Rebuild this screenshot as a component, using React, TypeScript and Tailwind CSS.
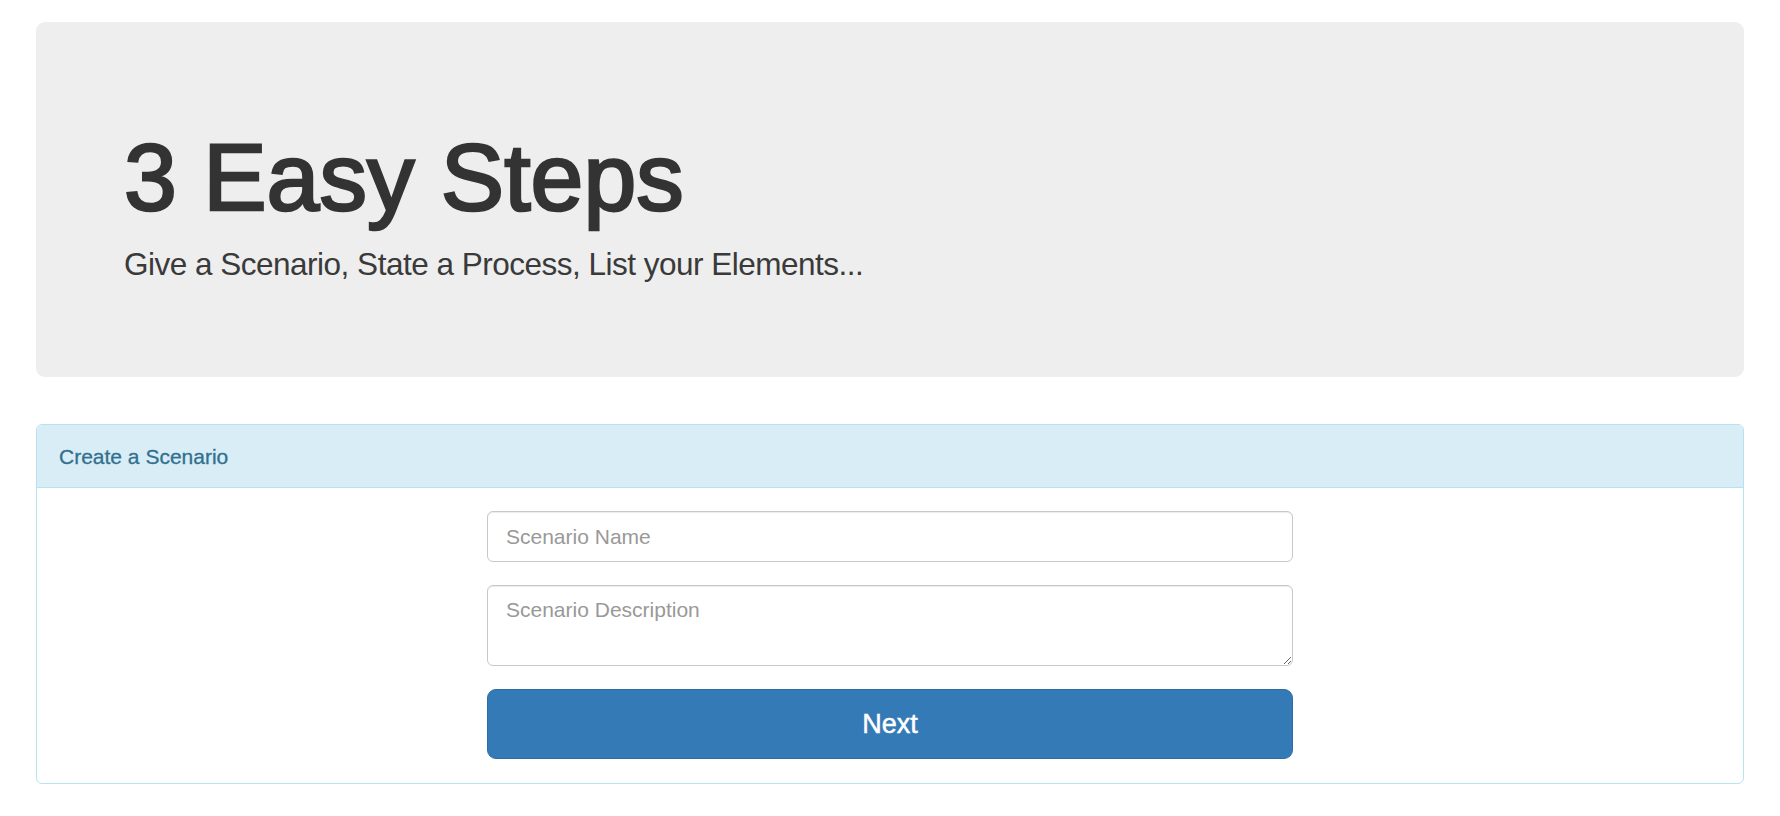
export default function App() {
  return (
    <div className="min-h-screen bg-white px-[36px] pt-[22px] font-['Liberation_Sans',Arial,sans-serif] text-[#333]">
      <section className="h-[355px] rounded-[9px] bg-[#eeeeee] pl-[88px] pt-[108px]">
        <h1 className="text-[95px] leading-[95px] font-medium [-webkit-text-stroke:2.6px_#333]">3 Easy Steps</h1>
        <p className="mt-[17px] text-[31.5px] leading-[44px] font-light tracking-[-0.5px] text-[#3a3a3a]">
          Give a Scenario, State a Process, List your Elements...
        </p>
      </section>

      <section className="mt-[47px] rounded-[6px] border border-[#b5e3ee] bg-white">
        <div className="flex h-[63px] items-center rounded-t-[5px] border-b border-[#b5e3ee] bg-[#d9edf7] pl-[22px]">
          <h3 className="text-[21px] leading-[31px] text-[#31708f] [-webkit-text-stroke:0.3px_#31708f]">Create a Scenario</h3>
        </div>

        <form className="mx-auto flex w-[806px] flex-col pt-[23px] pb-[24px]">
          <input
            type="text"
            placeholder="Scenario Name"
            className="h-[51px] rounded-[6px] border border-[#c8c8c8] px-[18px] text-[21px] leading-[30px] text-[#555] shadow-[inset_0_1px_1px_rgba(0,0,0,0.075)] outline-none placeholder:text-[#999]"
          />
          <textarea
            placeholder="Scenario Description"
            className="mt-[23px] h-[81px] rounded-[6px] border border-[#c8c8c8] px-[18px] pt-[9px] text-[21px] leading-[30px] text-[#555] shadow-[inset_0_1px_1px_rgba(0,0,0,0.075)] outline-none placeholder:text-[#999]"
          />
          <button
            type="button"
            className="mt-[23px] h-[70px] rounded-[9px] border border-[#2e6da4] bg-[#337ab7] text-[27px] text-white [-webkit-text-stroke:0.5px_#fff]"
          >
            Next
          </button>
        </form>
      </section>
    </div>
  );
}
